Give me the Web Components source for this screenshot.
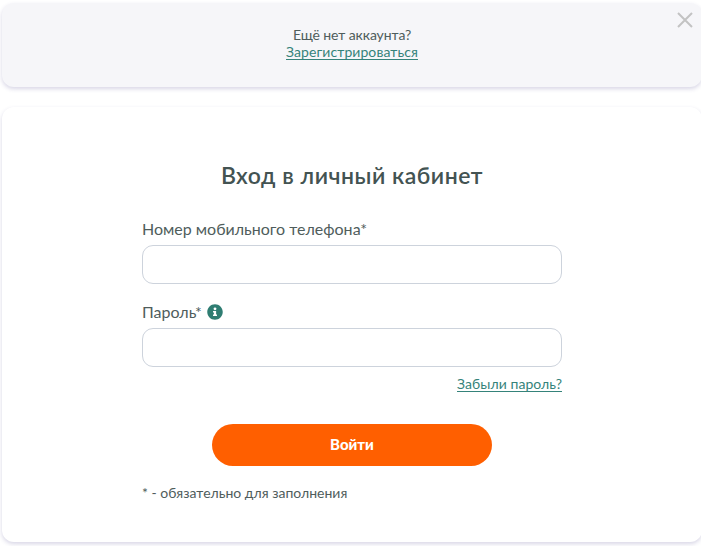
<!DOCTYPE html>
<html lang="ru">
<head>
<meta charset="utf-8">
<title>Вход в личный кабинет</title>
<style>
	html {
		overflow: hidden;
	}
	body {
		margin: 0;
		background: #fff;
		color: #4f5d5c;
		font-family: Lato, 'Open Sans', sans-serif;
		font-size: 14px;
		--color-link: #35837a;
		--color-title: #435352;
		--color-accent: #ff5f00;
		--color-border: #cdd3dc;
	}
</style>
</head>
<body>
<login-page></login-page>
<script>
class UiCard extends HTMLElement {
	constructor() {
		super();
		this.attachShadow({ mode: 'open' });
		this.shadowRoot.innerHTML = `
			<style>
				:host {
					display: block;
					box-sizing: border-box;
					border-radius: 12px;
					background: #fff;
					box-shadow: 0 2px 4px rgba(60, 50, 130, .2);
				}
				:host([muted]) {
					background: #f6f6f9;
				}
			</style>
			<slot></slot>
		`;
	}
}

class TextLink extends HTMLElement {
	constructor() {
		super();
		this.attachShadow({ mode: 'open' });
		this.shadowRoot.innerHTML = `
			<style>
				:host {
					display: inline-block;
				}
				a {
					color: var(--color-link, #2f7d72);
					text-decoration: underline;
					text-underline-offset: 2px;
					text-decoration-thickness: 1px;
					text-decoration-skip-ink: none;
					cursor: pointer;
				}
			</style>
			<a><slot></slot></a>
		`;
	}
}

class CloseButton extends HTMLElement {
	constructor() {
		super();
		this.attachShadow({ mode: 'open' });
		this.shadowRoot.innerHTML = `
			<style>
				:host {
					display: block;
					width: 16px;
					height: 16px;
					cursor: pointer;
				}
				svg {
					display: block;
				}
			</style>
			<svg width="16" height="16" viewBox="0 0 16 16">
				<path d="M1 1L15 15M15 1L1 15" fill="none" stroke="#c3c3c3" stroke-width="2"/>
			</svg>
		`;
	}
}

class InfoIcon extends HTMLElement {
	constructor() {
		super();
		this.attachShadow({ mode: 'open' });
		this.shadowRoot.innerHTML = `
			<style>
				:host {
					display: block;
					width: 16px;
					height: 16px;
				}
				svg {
					display: block;
				}
			</style>
			<svg width="16" height="16" viewBox="0 0 512 512">
				<path fill="#2f7d72" fill-rule="evenodd" d="M256 8C119 8 8 119 8 256s111 248 248 248 248-111 248-248S393 8 256 8zm0 100a46 46 0 1 1 0 92 46 46 0 0 1 0-92zm64 266c0 7-5 12-12 12H204c-7 0-12-5-12-12v-28c0-7 5-12 12-12h16v-62h-16c-7 0-12-5-12-12v-28c0-7 5-12 12-12h76c7 0 12 5 12 12v102h16c7 0 12 5 12 12v28z"/>
			</svg>
		`;
	}
}

class TextField extends HTMLElement {
	constructor() {
		super();
		this.attachShadow({ mode: 'open' });
		this.shadowRoot.innerHTML = `
			<style>
				:host {
					display: block;
				}
				.label {
					display: flex;
					align-items: center;
					gap: 5px;
					height: 20px;
					margin-bottom: 6px;
					font-size: 16px;
					white-space: nowrap;
				}
				.label span {
					padding-bottom: 2px;
				}
				input {
					display: block;
					box-sizing: border-box;
					width: 100%;
					height: 39px;
					margin: 0;
					padding: 0 12px;
					border: 1px solid var(--color-border, #ccc);
					border-radius: 11px;
					background: #fff;
					font: inherit;
					outline: none;
				}
			</style>
			<label class="label" for="field"><span></span><slot></slot></label>
			<input id="field">
		`;
	}
	connectedCallback() {
		this.shadowRoot.querySelector('span').textContent = this.getAttribute('label');
		this.shadowRoot.querySelector('input').type = this.getAttribute('type') || 'text';
	}
}

class SubmitButton extends HTMLElement {
	constructor() {
		super();
		this.attachShadow({ mode: 'open' });
		this.shadowRoot.innerHTML = `
			<style>
				:host {
					display: block;
				}
				button {
					display: block;
					width: 280px;
					height: 42px;
					padding: 0 0 2px;
					border: 0;
					border-radius: 21px;
					background: var(--color-accent, orange);
					color: #fff;
					font: inherit;
					font-size: 15px;
					font-weight: 900;
					cursor: pointer;
				}
			</style>
			<button type="button"><slot></slot></button>
		`;
	}
}

class LoginPage extends HTMLElement {
	constructor() {
		super();
		this.attachShadow({ mode: 'open' });
		this.shadowRoot.innerHTML = `
			<style>
				:host {
					display: grid;
					grid-template-rows: 84px 435px;
					row-gap: 20px;
					width: 700px;
					padding: 3px 0 4px 2px;
				}
				.signup {
					position: relative;
					padding-top: 23px;
					line-height: 17px;
					text-align: center;
				}
				.ask {
					letter-spacing: -.1px;
				}
				.register {
					letter-spacing: .08px;
				}
				close-button {
					position: absolute;
					top: 9px;
					right: 9px;
				}
				.login {
					padding: 0 140px;
				}
				h1 {
					margin: 0;
					padding-top: 53px;
					color: var(--color-title);
					font-size: 23px;
					font-weight: 600;
					letter-spacing: .52px;
					line-height: 30px;
					text-align: center;
					white-space: nowrap;
				}
				.phone {
					margin-top: 29px;
				}
				.password {
					margin-top: 18px;
				}
				.forgot {
					margin-top: 8px;
					line-height: 17px;
					text-align: right;
				}
				.forgot text-link {
					letter-spacing: .06px;
				}
				submit-button {
					margin: 32px 0 0 70px;
				}
				.note {
					margin-top: 18px;
					line-height: 17px;
				}
			</style>
			<ui-card class="signup" muted>
				<div class="ask">Ещё нет аккаунта?</div>
				<text-link class="register">Зарегистрироваться</text-link>
				<close-button></close-button>
			</ui-card>
			<ui-card class="login">
				<h1>Вход в личный кабинет</h1>
				<text-field class="phone" label="Номер мобильного телефона*"></text-field>
				<text-field class="password" type="password" label="Пароль*"><info-icon></info-icon></text-field>
				<div class="forgot"><text-link>Забыли пароль?</text-link></div>
				<submit-button>Войти</submit-button>
				<div class="note">* - обязательно для заполнения</div>
			</ui-card>
		`;
	}
}

customElements.define('ui-card', UiCard);
customElements.define('text-link', TextLink);
customElements.define('close-button', CloseButton);
customElements.define('info-icon', InfoIcon);
customElements.define('text-field', TextField);
customElements.define('submit-button', SubmitButton);
customElements.define('login-page', LoginPage);
</script>
</body>
</html>
